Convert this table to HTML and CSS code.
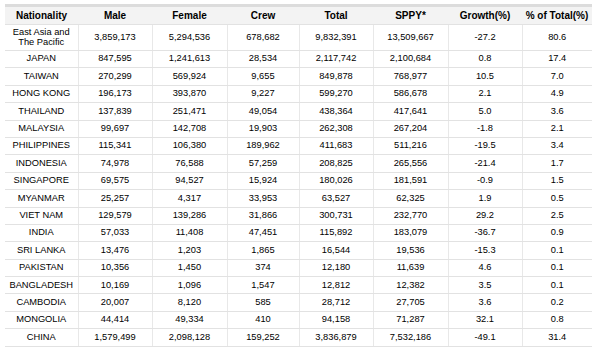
FILE: index.html
```html
<!DOCTYPE html>
<html lang="en">
<head>
  <meta charset="UTF-8">
  <title>Visitor Arrivals by Nationality</title>
  <link rel="stylesheet" href="styles.css">
</head>
<body>
<table class="stats">
  <colgroup>
    <col class="c1"><col class="c2"><col class="c3"><col class="c4">
    <col class="c5"><col class="c6"><col class="c7"><col class="c8">
  </colgroup>
  <thead>
    <tr>
      <th>Nationality</th><th>Male</th><th>Female</th><th>Crew</th>
      <th>Total</th><th>SPPY*</th><th>Growth(%)</th><th>% of Total(%)</th>
    </tr>
  </thead>
  <tbody>
    <tr class="region"><td>East Asia and<br>The Pacific</td><td>3,859,173</td><td>5,294,536</td><td>678,682</td><td>9,832,391</td><td>13,509,667</td><td>-27.2</td><td>80.6</td></tr>
    <tr><td>JAPAN</td><td>847,595</td><td>1,241,613</td><td>28,534</td><td>2,117,742</td><td>2,100,684</td><td>0.8</td><td>17.4</td></tr>
    <tr><td>TAIWAN</td><td>270,299</td><td>569,924</td><td>9,655</td><td>849,878</td><td>768,977</td><td>10.5</td><td>7.0</td></tr>
    <tr><td>HONG KONG</td><td>196,173</td><td>393,870</td><td>9,227</td><td>599,270</td><td>586,678</td><td>2.1</td><td>4.9</td></tr>
    <tr><td>THAILAND</td><td>137,839</td><td>251,471</td><td>49,054</td><td>438,364</td><td>417,641</td><td>5.0</td><td>3.6</td></tr>
    <tr><td>MALAYSIA</td><td>99,697</td><td>142,708</td><td>19,903</td><td>262,308</td><td>267,204</td><td>-1.8</td><td>2.1</td></tr>
    <tr><td>PHILIPPINES</td><td>115,341</td><td>106,380</td><td>189,962</td><td>411,683</td><td>511,216</td><td>-19.5</td><td>3.4</td></tr>
    <tr><td>INDONESIA</td><td>74,978</td><td>76,588</td><td>57,259</td><td>208,825</td><td>265,556</td><td>-21.4</td><td>1.7</td></tr>
    <tr><td>SINGAPORE</td><td>69,575</td><td>94,527</td><td>15,924</td><td>180,026</td><td>181,591</td><td>-0.9</td><td>1.5</td></tr>
    <tr><td>MYANMAR</td><td>25,257</td><td>4,317</td><td>33,953</td><td>63,527</td><td>62,325</td><td>1.9</td><td>0.5</td></tr>
    <tr><td>VIET NAM</td><td>129,579</td><td>139,286</td><td>31,866</td><td>300,731</td><td>232,770</td><td>29.2</td><td>2.5</td></tr>
    <tr><td>INDIA</td><td>57,033</td><td>11,408</td><td>47,451</td><td>115,892</td><td>183,079</td><td>-36.7</td><td>0.9</td></tr>
    <tr><td>SRI LANKA</td><td>13,476</td><td>1,203</td><td>1,865</td><td>16,544</td><td>19,536</td><td>-15.3</td><td>0.1</td></tr>
    <tr><td>PAKISTAN</td><td>10,356</td><td>1,450</td><td>374</td><td>12,180</td><td>11,639</td><td>4.6</td><td>0.1</td></tr>
    <tr><td>BANGLADESH</td><td>10,169</td><td>1,096</td><td>1,547</td><td>12,812</td><td>12,382</td><td>3.5</td><td>0.1</td></tr>
    <tr><td>CAMBODIA</td><td>20,007</td><td>8,120</td><td>585</td><td>28,712</td><td>27,705</td><td>3.6</td><td>0.2</td></tr>
    <tr><td>MONGOLIA</td><td>44,414</td><td>49,334</td><td>410</td><td>94,158</td><td>71,287</td><td>32.1</td><td>0.8</td></tr>
    <tr><td>CHINA</td><td>1,579,499</td><td>2,098,128</td><td>159,252</td><td>3,836,879</td><td>7,532,186</td><td>-49.1</td><td>31.4</td></tr>
  </tbody>
</table>
</body>
</html>
```

FILE: styles.css
```css
body {
  margin: 0;
  padding: 4px 8px 0 5px;
  background: #fff;
  font-family: "Liberation Sans", Arial, sans-serif;
  color: #000;
}
.stats {
  width: 587px;
  border-collapse: collapse;
  table-layout: fixed;
  border-top: 3px solid #dcdcdc;
}
.c1 { width: 73px; }
.c2 { width: 74px; }
.c3 { width: 75px; }
.c4 { width: 72px; }
.c5 { width: 74px; }
.c6 { width: 75px; }
.c7 { width: 74px; }
.c8 { width: 70px; }
.stats th {
  background: #f3f3f3;
  font-size: 10px;
  font-weight: bold;
  height: 17px;
  padding: 0;
  text-align: center;
  border-bottom: 1px solid #e2e2e2;
}
.stats td {
  font-size: 9.3px;
  line-height: 9.5px;
  height: 16.4px;
  padding: 0;
  text-align: center;
  border-bottom: 1px solid #e2e2e2;
  border-left: 1px solid #e8e8e8;
  white-space: nowrap;
}
.stats td:first-child {
  border-left: none;
}
.stats .region td {
  height: 25px;
}
```
